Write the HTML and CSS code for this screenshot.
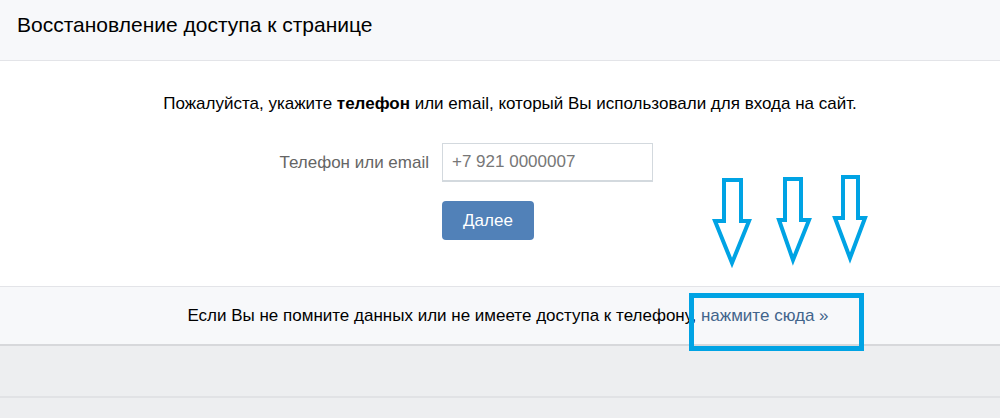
FILE: index.html
```html
<!DOCTYPE html>
<html>
<head>
    <link rel="stylesheet" href="styles.css">
</head>
<body>

    <div class="box">
        <div class="box-header">
            <h1>Восстановление доступа к странице</h1>
        </div>

        <div class="box-body">
            <p class="intro">Пожалуйста, укажите <b>телефон</b> или email, который Вы использовали для входа на сайт.</p>

            <form class="restore-form">
                <div class="form-row">
                    <label for="login">Телефон или email</label>
                    <input type="text" id="login" name="login" value="+7 921 0000007">
                </div>
                <div class="form-row">
                    <span></span>
                    <button type="button">Далее</button>
                </div>
            </form>
        </div>

        <div class="box-footer">
            Если Вы не помните данных или не имеете доступа к телефону,&nbsp;<a href="#">нажмите сюда »</a>
        </div>
    </div>

    <div class="page-bottom"></div>

    <!-- annotation drawn over the page -->
    <svg class="marks" width="1000" height="418" viewBox="0 0 1000 418">
        <g fill="none" stroke="#00a3e4" stroke-width="4" stroke-linejoin="miter">
            <path d="M724 180 H741 V221 H749 L732 263 L715 221 H724 Z"/>
            <path d="M785 179 H801 V220 H809 L793 260 L779 220 H785 Z"/>
            <path d="M843 177 H858 V218 H865 L850 258 L835 218 H843 Z"/>
            <rect x="691.5" y="295.5" width="170" height="53" stroke-width="5"/>
        </g>
    </svg>

</body>
</html>
```

FILE: styles.css
```css
body {
    font-family: "Liberation Sans", Arial, sans-serif;
    font-size: 17px;
    line-height: 20px;
    color: #000;
    background-color: #edeef0;
    margin: 0;
    padding: 0;
    overflow: hidden;
}

.box {
    background-color: #fff;
}

.box-header {
    background-color: #f7f8fa;
    border-bottom: 1px solid #e3e4e8;
    height: 60px;
    padding: 0 17px;
    display: flex;
    align-items: center;
}

.box-header h1 {
    font-size: 21px;
    line-height: 24px;
    font-weight: normal;
    margin: 0 0 10px 0;
}

.box-body {
    padding: 33px 0 46px 20px;
}

.intro {
    text-align: center;
    margin: 0 0 29px 0;
}

.restore-form {
    display: flex;
    flex-direction: column;
    gap: 19px;
}

.form-row {
    display: grid;
    grid-template-columns: 422px 211px;
    align-items: center;
}

.form-row label {
    color: #656565;
    text-align: right;
    padding-right: 13px;
}

.form-row input {
    height: 39px;
    box-sizing: border-box;
    border: 1px solid #d3d9de;
    border-bottom: 2px solid #d3d9de;
    padding: 0 9px;
    font-family: inherit;
    font-size: 17px;
    color: #777;
}

.form-row button {
    width: 92px;
    height: 39px;
    background-color: #5181b8;
    color: #fff;
    border: none;
    border-radius: 4px;
    font-family: inherit;
    font-size: 17px;
    cursor: pointer;
}

.box-footer {
    background-color: #f7f8fa;
    border-top: 1px solid #e3e4e8;
    border-bottom: 2px solid #d7d8db;
    height: 57px;
    padding-left: 16px;
    display: flex;
    align-items: center;
    justify-content: center;
}

.box-footer a {
    color: #42648b;
    text-decoration: none;
}

.page-bottom {
    height: 50px;
    border-bottom: 2px solid #e1e2e5;
}

.marks {
    position: absolute;
    top: 0;
    left: 0;
    pointer-events: none;
}
```
